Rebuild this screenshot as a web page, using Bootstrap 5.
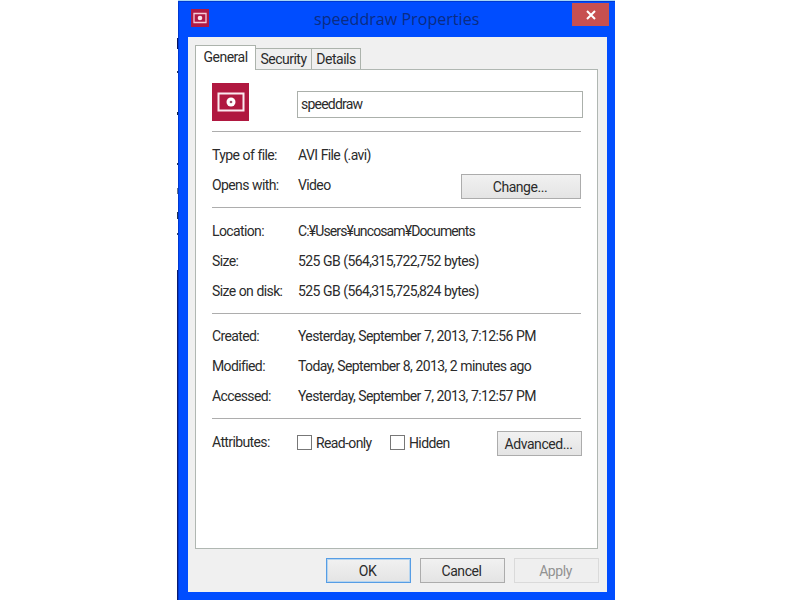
<!DOCTYPE html>
<html lang="en">
<head>
<meta charset="utf-8">
<title>speeddraw Properties</title>
<link href="https://cdn.jsdelivr.net/npm/bootstrap@5.3.0/dist/css/bootstrap.min.css" rel="stylesheet">
<style>
body{width:800px;height:600px;overflow:hidden;background:#fff;color:#2b2b2b;font:14px/18px Roboto,"Liberation Sans",Arial,sans-serif;letter-spacing:-.62px;word-spacing:.4px}
.desktop{height:600px;padding-left:177px;background:linear-gradient(#a6d5f5,#a6d5f5) 177px 0/438px 1px no-repeat}
.edge{width:1px;height:600px;background:linear-gradient(#fff 38px,#0a1560 38px,#0a1560 49px,#fff 49px,#fff 71px,#235 71px,#235 73px,#fff 73px,#fff 112px,#124 112px,#124 115px,#fff 115px,#fff 163px,#235 163px,#235 165px,#fff 165px,#fff 188px,#678 188px,#678 194px,#fff 194px,#fff 212px,#235 212px,#235 219px,#fff 219px,#fff 233px,#346 233px,#346 235px,#fff 235px,#fff 270px,#0a1c70 270px)}
.window{width:437px;height:599px;margin-top:1px;padding:0 8px 8px 9px;background:#004dff;border:solid #0039d2;border-width:1px 0 0 1px}
.titlebar{height:35px}
.app-icon{width:18px;height:18px;margin:7px 0 0 3px}
.caption-text{font:16px/22px "Open Sans","Noto Sans",sans-serif;letter-spacing:.05px;word-spacing:0;color:#0b2c83;margin:6px 0 0 105px}
.close-box{width:37px;height:23px;background:#c75050;margin:1px -2px 0 0}
.client{height:555px;background:#f0f0f0;padding:8px 9px 0 7px}
.tabs{height:24px}
.tab-item{height:21px;border:1px solid #acb3ac;border-bottom:0;background:#efefef;text-align:center;line-height:21px;margin-left:-1px;letter-spacing:-.5px}
.tab-item.current{height:25px;background:#fff;margin:0;z-index:1;line-height:22px}
.pane{width:403px;height:480px;background:#fff;border:1px solid #b0b7b2;padding-left:16px}
.section{width:369px;border-bottom:1px solid #adadad;padding-top:8px}
.line{height:30px}
.line>.label{width:86px;flex:none}
.path-text{letter-spacing:-.88px}
.name-field{width:286px;height:27px;border:1px solid #abb0ab;border-radius:0;padding:0 3px 2px;font:inherit;letter-spacing:-.78px;color:#2b2b2b;flex:none}
.push{height:25px;border:1px solid #acacac;border-radius:0;background:linear-gradient(#f1f1f1,#e4e4e4);font:inherit;letter-spacing:-.45px;color:#2b2b2b;padding:0 2px 0 0;white-space:nowrap}
.push.default{border-color:#569de5;box-shadow:inset 0 0 0 1px #b7d5ef}
.push:disabled{background:#efefef;border-color:#dadada;color:#929292;opacity:1}
.box{width:15px;height:15px;border:1px solid #777;background:#fff;flex:none}
</style>
<script src="https://cdn.jsdelivr.net/npm/bootstrap@5.3.0/dist/js/bootstrap.bundle.min.js"></script>
</head>
<body>
<main class="desktop d-flex">
<div class="edge"></div>
<div class="window">
  <header class="titlebar d-flex align-items-start">
    <svg class="app-icon" viewBox="0 0 18 18"><path fill="#b01a45" d="M0 0h18v18H0z"/><path fill="none" stroke="#f6c9d8" stroke-width="1.3" d="M3 4.5h12v9H3z"/><circle cx="9" cy="9" r="2.3" fill="#fbe3ec"/></svg>
    <div class="caption-text">speeddraw Properties</div>
    <div class="close-box ms-auto d-flex align-items-center justify-content-center"><svg width="10" height="10" viewBox="0 0 10 10"><path d="M1 1l8 8M9 1L1 9" stroke="#fff" stroke-width="2"/></svg></div>
  </header>
  <div class="client">
    <nav class="tabs d-flex align-items-end">
      <div class="tab-item current position-relative align-self-start" style="width:61px">General</div>
      <div class="tab-item" style="width:57px">Security</div>
      <div class="tab-item" style="width:50px">Details</div>
    </nav>
    <div class="pane">
      <div class="section d-flex align-items-start pt-0" style="height:62px">
        <svg style="margin:13px 48px 0 0" class="flex-shrink-0" width="37" height="38" viewBox="0 0 37 38"><path fill="#b01840" d="M0 0h37v38H0z"/><path fill="none" stroke="#fbe9ef" stroke-width="2" d="M6.5 10.5h25v17h-25z"/><circle cx="19" cy="19" r="4.5" fill="#fff"/><circle cx="19" cy="19" r="1.3" fill="#9d5068"/></svg>
        <input class="name-field" style="margin-top:21px" value="speeddraw">
      </div>
      <div class="section" style="height:76px">
        <div class="line d-flex align-items-center"><span class="label">Type of file:</span><span>AVI File (.avi)</span></div>
        <div class="line d-flex align-items-center"><span class="label">Opens with:</span><span>Video</span><button class="push ms-auto" style="width:120px;margin-top:3px">Change...</button></div>
      </div>
      <div class="section" style="height:106px">
        <div class="line d-flex align-items-center"><span class="label">Location:</span><span class="path-text">C:¥Users¥uncosam¥Documents</span></div>
        <div class="line d-flex align-items-center"><span class="label">Size:</span><span>525 GB (564,315,722,752 bytes)</span></div>
        <div class="line d-flex align-items-center"><span class="label">Size on disk:</span><span>525 GB (564,315,725,824 bytes)</span></div>
      </div>
      <div class="section" style="height:105px;padding-top:7px">
        <div class="line d-flex align-items-center"><span class="label">Created:</span><span>Yesterday, September 7, 2013, 7:12:56 PM</span></div>
        <div class="line d-flex align-items-center"><span class="label">Modified:</span><span>Today, September 8, 2013, 2 minutes ago</span></div>
        <div class="line d-flex align-items-center"><span class="label">Accessed:</span><span>Yesterday, September 7, 2013, 7:12:57 PM</span></div>
      </div>
      <div class="section border-0" style="width:370px">
        <div class="line d-flex align-items-center"><span class="label" style="width:85px">Attributes:</span><i class="box"></i><span style="width:74px;margin:1px 0 0 4px">Read-only</span><i class="box"></i><span style="margin:1px 0 0 4px">Hidden</span><button class="push ms-auto" style="width:85px;margin-top:3px">Advanced...</button></div>
      </div>
    </div>
    <footer class="d-flex justify-content-end" style="gap:9px;padding-top:9px;margin-right:-1px">
      <button class="push default" style="width:85px">OK</button>
      <button class="push" style="width:85px">Cancel</button>
      <button class="push" style="width:85px" disabled>Apply</button>
    </footer>
  </div>
</div>
</main>
</body>
</html>
